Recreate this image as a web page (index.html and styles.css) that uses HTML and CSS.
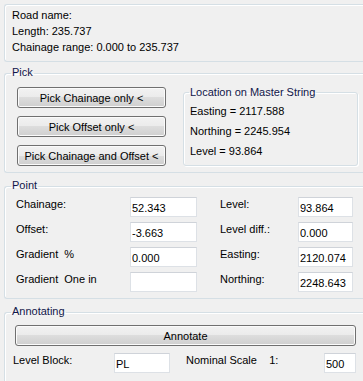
FILE: index.html
```html
<!DOCTYPE html>
<html lang="en">
<head>
    <meta charset="UTF-8">
    <title>Road Point</title>
    <link rel="stylesheet" href="styles.css">
</head>
<body>

<div class="window">
    <div class="info">
        <div>Road name:</div>
        <div>Length: 235.737</div>
        <div>Chainage range: 0.000 to 235.737</div>
    </div>

    <fieldset class="group">
        <legend>Pick</legend>
        <div class="pick-body">
            <div class="pick-buttons">
                <button type="button" class="win-button">Pick Chainage only &lt;</button>
                <button type="button" class="win-button">Pick Offset only &lt;</button>
                <button type="button" class="win-button">Pick Chainage and Offset &lt;</button>
            </div>
            <fieldset class="group location">
                <legend>Location on Master String</legend>
                <div class="location-body">
                    <div>Easting = 2117.588</div>
                    <div>Northing = 2245.954</div>
                    <div>Level = 93.864</div>
                </div>
            </fieldset>
        </div>
    </fieldset>

    <fieldset class="group">
        <legend>Point</legend>
        <div class="point-grid">
            <label for="chainage">Chainage:</label>
            <input type="text" id="chainage" value="52.343">
            <label for="level">Level:</label>
            <input type="text" id="level" value="93.864">

            <label for="offset">Offset:</label>
            <input type="text" id="offset" value="-3.663">
            <label for="levelDiff">Level diff.:</label>
            <input type="text" id="levelDiff" value="0.000">

            <label for="gradPercent">Gradient&nbsp; %</label>
            <input type="text" id="gradPercent" value="0.000">
            <label for="easting">Easting:</label>
            <input type="text" id="easting" value="2120.074">

            <label for="gradOneIn">Gradient&nbsp; One in</label>
            <input type="text" id="gradOneIn" value="">
            <label for="northing">Northing:</label>
            <input type="text" id="northing" value="2248.643">
        </div>
    </fieldset>

    <fieldset class="group">
        <legend>Annotating</legend>
        <div class="annot-body">
            <button type="button" class="win-button annotate">Annotate</button>
            <div class="annot-row">
                <label for="levelBlock" class="block-label">Level Block:</label>
                <input type="text" id="levelBlock" class="block-input" value="PL">
                <label for="scale" class="scale-label">Nominal Scale&nbsp;&nbsp;&nbsp; 1:</label>
                <input type="text" id="scale" class="scale-input" value="500">
            </div>
        </div>
    </fieldset>
</div>

</body>
</html>
```

FILE: styles.css
```css
html, body {
    margin: 0;
    padding: 0;
    overflow: hidden;
    background-color: #f0f0f0;
    font-family: "Liberation Sans", Arial, sans-serif;
    font-size: 11px;
    color: #000;
}

/* the dialog is cut off on the right, so the boxes run to the edge */
.window {
    width: 363px;
    box-sizing: border-box;
    padding: 4px 0 0 4px;
}

/* top panel with road details */
.info {
    border: 1px solid #d5dfe5;
    border-right: none;
    border-radius: 3px 0 0 3px;
    box-shadow: inset 1px 1px 0 #fff;
    padding: 2px 0 6px 7px;
    line-height: 16px;
}

.group {
    margin: 6px 0 0 0;
    padding: 0;
    border: 1px solid #d5dfe5;
    border-right: none;
    border-radius: 3px 0 0 3px;
    box-shadow: inset 1px 1px 0 #fff;
    min-width: 0;
}

.window > .group:first-of-type {
    margin-top: 4px;
}

.group legend {
    margin-left: 6px;
    padding: 0 1px 3px 1px;
    line-height: 12px;
    color: #10164a;
}

/* Pick */
.pick-body {
    display: flex;
    align-items: flex-start;
    gap: 17px;
    padding: 6px 0 6px 12px;
}

.pick-buttons {
    display: flex;
    flex-direction: column;
    gap: 8px;
    width: 149px;
}

.win-button {
    height: 21px;
    padding: 0;
    font-family: inherit;
    font-size: 11px;
    color: #000;
    border: 1px solid #707070;
    border-radius: 3px;
    background: linear-gradient(#f2f2f2 0%, #ebebeb 50%, #dddddd 50%, #cfcfcf 100%);
    box-shadow: inset 0 0 0 1px #fbfbfb;
}

.location {
    margin: -1px 0 0 0;
    width: 175px;
    box-sizing: border-box;
    border-right: 1px solid #d5dfe5;
    border-radius: 3px;
    box-shadow: inset 1px 1px 0 #fff, 1px 1px 0 #fff;
}

.location legend {
    margin-left: 5px;
    padding: 0 1px;
}

.location-body {
    padding: 3px 0 4px 6px;
    line-height: 20px;
}

/* Point */
.point-grid {
    display: grid;
    grid-template-columns: 114px 90px 78px 55px;
    row-gap: 5px;
    padding: 3px 0 6px 11px;
}

.point-grid label,
.annot-row label {
    padding-top: 1px;
    line-height: 12px;
}

input[type="text"] {
    box-sizing: border-box;
    height: 20px;
    margin: 0;
    padding: 2px 1px 0 1px;
    font-family: inherit;
    font-size: 11px;
    color: #000;
    background: #fff;
    border: 1px solid #dde1e6;
    border-top-color: #cfd3d9;
    outline: none;
}

.point-grid input {
    width: 67px;
}

.point-grid input:nth-of-type(2n) {
    width: 55px;
}

/* Annotating */
.annot-body {
    padding: 5px 0 12px 10px;
}

.annotate {
    display: block;
    width: 341px;
}

.annot-row {
    display: flex;
    align-items: flex-start;
    margin-top: 7px;
    margin-left: -2px;
}

.block-label {
    width: 101px;
}

.block-input {
    width: 56px;
}

.scale-label {
    margin-left: 16px;
    width: 138px;
    white-space: pre;
}

.scale-input {
    width: 32px;
}
```
